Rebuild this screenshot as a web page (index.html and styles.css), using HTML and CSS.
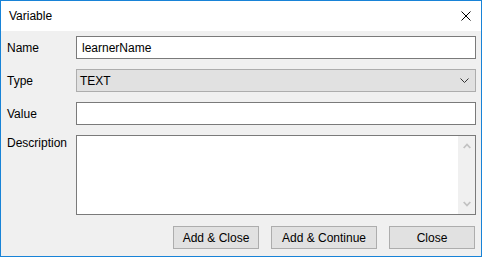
FILE: index.html
```html
<!DOCTYPE html>
<html lang="en">
<head>
  <meta charset="UTF-8" />
  <title>Variable</title>
  <link rel="stylesheet" href="styles.css">
</head>
<body>
  <div class="window">
    <div class="titlebar">
      <span class="title">Variable</span>
      <svg class="close-x" width="10" height="10" viewBox="0 0 10 10" aria-label="Close">
        <path d="M0.5 0.5 L9.5 9.5 M9.5 0.5 L0.5 9.5" stroke="#000" stroke-width="1" fill="none" />
      </svg>
    </div>

    <div class="content">
      <div class="form">
        <label class="label">Name</label>
        <div class="field input">learnerName</div>

        <label class="label">Type</label>
        <div class="field select">
          <span>TEXT</span>
          <svg width="9" height="5" viewBox="0 0 9 5">
            <path d="M0.5 0.5 L4.5 4.5 L8.5 0.5" stroke="#333" stroke-width="1" fill="none" />
          </svg>
        </div>

        <label class="label">Value</label>
        <div class="field input"></div>

        <label class="label top">Description</label>
        <div class="field textarea">
          <div class="text-area"></div>
          <div class="scrollbar">
            <svg width="8" height="6" viewBox="0 0 8 6">
              <path d="M0.7 5 L4 1.5 L7.3 5" stroke="#c2c2c2" stroke-width="1.8" fill="none" />
            </svg>
            <svg width="8" height="6" viewBox="0 0 8 6">
              <path d="M0.7 1 L4 4.5 L7.3 1" stroke="#c2c2c2" stroke-width="1.8" fill="none" />
            </svg>
          </div>
        </div>
      </div>

      <div class="buttons">
        <button class="btn btn-small">Add &amp; Close</button>
        <button class="btn btn-wide">Add &amp; Continue</button>
        <button class="btn btn-small">Close</button>
      </div>
    </div>
  </div>
</body>
</html>
```

FILE: styles.css
```css
* { margin: 0; padding: 0; box-sizing: border-box; }

body {
  background: #f0f0f0;
  font-family: "Liberation Sans", Arial, sans-serif;
  font-size: 12px;
  color: #000;
}

.window {
  width: 482px;
  height: 257px;
  border: 1px solid #1883d7;
  display: flex;
  flex-direction: column;
  background: #f0f0f0;
}

/* TITLE BAR */
.titlebar {
  height: 30px;
  background: #fff;
  display: flex;
  align-items: center;
  justify-content: space-between;
  padding: 0 10px 0 8px;
}
.title { font-size: 12px; }
.close-x { display: block; margin-top: -1px; }

/* FORM */
.content {
  flex: 1;
  padding: 5px 5px 7px 6px;
  display: flex;
  flex-direction: column;
}

.form {
  display: grid;
  grid-template-columns: 69px 1fr;
  row-gap: 10px;
}

.label {
  align-self: center;
}
.label.top {
  align-self: start;
  padding-top: 1px;
}

.field {
  height: 23px;
}

.input {
  background: #fff;
  border: 1px solid #7a7a7a;
  padding: 0 5px;
  display: flex;
  align-items: center;
}

.select {
  background: #e1e1e1;
  border: 1px solid #adadad;
  padding: 0 5px 0 3px;
  display: flex;
  align-items: center;
  justify-content: space-between;
}
.select svg { display: block; margin-right: 1px; }

.textarea {
  height: 80px;
  background: #fff;
  border: 1px solid #7a7a7a;
  display: flex;
}
.text-area { flex: 1; }
.scrollbar {
  width: 17px;
  background: #f0f0f0;
  display: flex;
  flex-direction: column;
  justify-content: space-between;
  align-items: center;
  padding: 7px 0 7px 1px;
}
.scrollbar svg { display: block; }

/* BUTTONS */
.buttons {
  margin-top: 11px;
  margin-right: 1px;
  display: flex;
  justify-content: flex-end;
  gap: 12px;
}

.btn {
  height: 23px;
  background: #e1e1e1;
  border: 1px solid #adadad;
  font-family: inherit;
  font-size: 12px;
  color: #000;
}
.btn-small { width: 86px; }
.btn-wide { width: 106px; }
```
